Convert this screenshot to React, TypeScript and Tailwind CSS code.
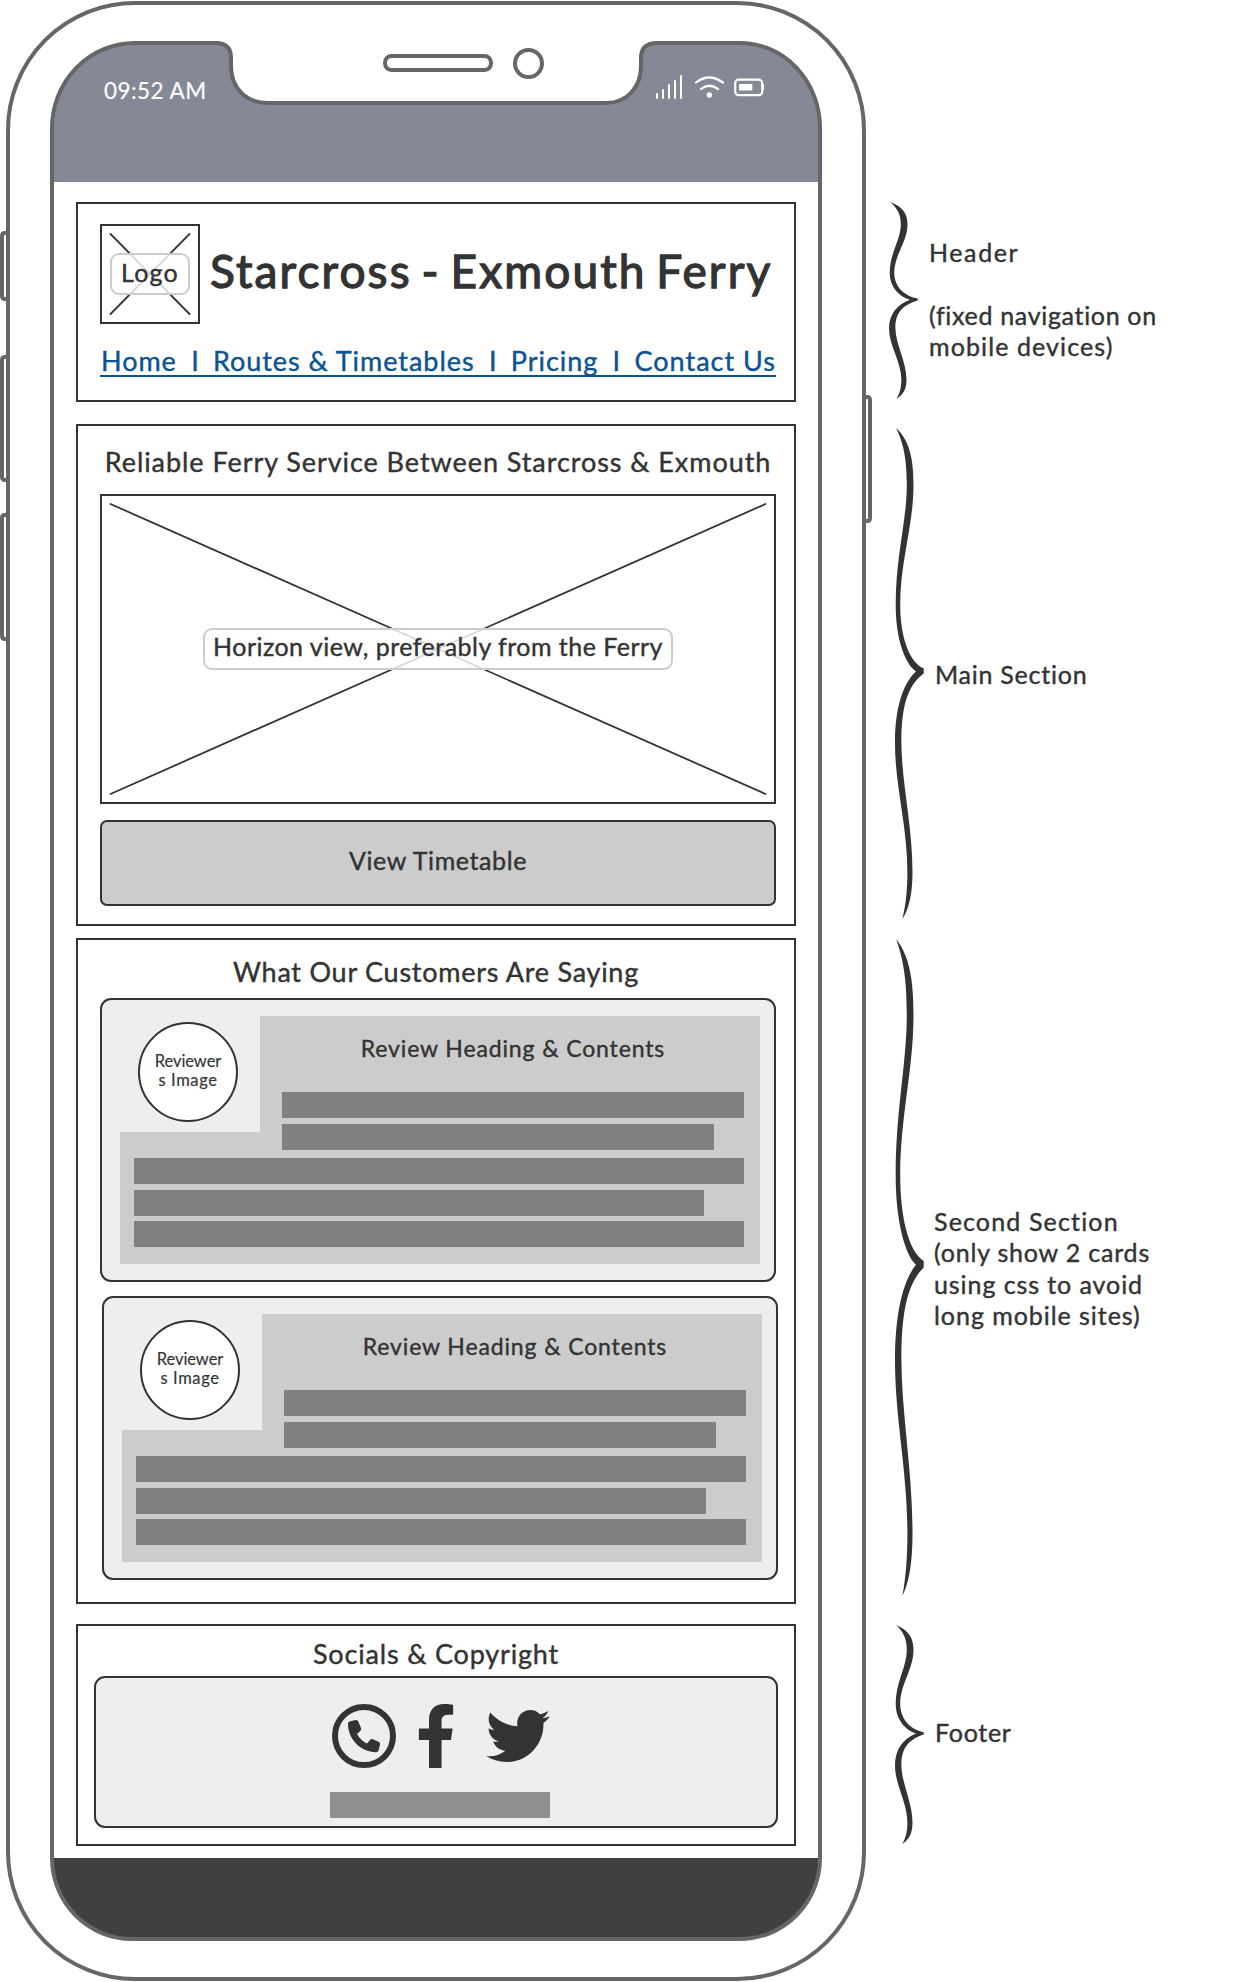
import type { ReactNode } from "react";
import { FaFacebookF, FaTwitter } from "react-icons/fa";

function T({ className, children }: { className: string; children: ReactNode }) {
  return <span className={"whitespace-pre " + className}>{children}</span>;
}

function Crossed({ w, h }: { w: number; h: number }) {
  return (
    <svg className="absolute inset-0" width={w} height={h} stroke="#333" strokeWidth="1.8" strokeLinecap="round">
      <path d={`M10.500 10L${w - 10.5} ${h - 10}M10.500 ${h - 10}L${w - 10.5} 10`} />
    </svg>
  );
}

function Brace({ className }: { className: string }) {
  return (
    <svg className={className} viewBox="0 0 29 100" preserveAspectRatio="none" fill="#333">
      <path d="M1.2 0C8 3 11.8 6 11.8 11.5C11.8 19 .7 26 .7 36C.7 43 10 48 21 49.6C8 52 0 57 0 64.2C0 73 12.4 81 12.4 90.4C12.4 94 11 97 7.4 100C14 98 17.5 95 17.5 90.4C17.5 81 6.4 72 6.4 64C6.4 57 12 52.5 28.7 50V49C13 47.5 5.2 42 5.2 36C5.2 27 18.5 20 18.5 11.5C18.5 6 14 2.5 1.2 0Z" />
    </svg>
  );
}

function Bezel() {
  return (
    <svg className="absolute left-0 top-0" width="880" height="1982" fill="none" stroke="#666" strokeWidth="4">
      <path fill="#848995" stroke="none" d="M52 182V128A83 85 0 0 1 135 43H216Q231 43 231 60C231 84 245 103 268 103H606C628 103 641 86 641 66V60Q641 43 657 43H740A80 85 0 0 1 820 128V182Z" />
      <path fill="#404040" stroke="none" d="M52 1858H820A80 81 0 0 1 740 1939H132A80 81 0 0 1 52 1858Z" />
      <path d="M52 128A83 85 0 0 1 135 43H216Q231 43 231 58V66C231 87 245 103 268 103H606C628 103 641 86 641 66V58Q641 43 657 43H740A80 85 0 0 1 820 128V1858A80 81 0 0 1 740 1939H132A80 81 0 0 1 52 1858Z" />
      <rect x="8" y="3" width="856" height="1976" rx="127" />
      <path d="M8 233H5Q2 233 2 236V296Q2 299 5 299H8M8 357H5Q2 357 2 360V477Q2 480 5 480H8M8 515H5Q2 515 2 518V636Q2 639 5 639H8M864 397H867Q870 397 870 400V518Q870 521 867 521H864" />
      <rect x="385" y="56" width="106" height="14" rx="6.5" />
      <circle cx="528.5" cy="63.5" r="13.5" />
    </svg>
  );
}

function StatusIcons() {
  return (
    <svg className="absolute left-[654px] top-[72px]" width="114" height="30" fill="none" stroke="#fff" strokeWidth="2" strokeLinecap="round">
      <path d="M3 22V26M9 18V26M15 13V26M21 9V26M27 4V26" />
      <path d="M42 10.500Q55 .5 69 10.500M47 17Q55 10.500 64 17" strokeWidth="2.2" />
      <circle cx="55.300" cy="23" r="2.700" fill="#fff" stroke="none" />
      <rect x="81.200" y="7.700" width="27" height="15.500" rx="3.500" strokeWidth="2.200" />
      <path d="M85 12H98.300V18.500H85ZM108 12H110V18.500H108Z" fill="#fff" stroke="none" />
    </svg>
  );
}

function ReviewCard({ className }: { className: string }) {
  return (
    <article className={"relative h-[284px] w-[676px] rounded-[11px] border-2 border-[#333] bg-[#eee] pl-[18px] pt-4 " + className}>
      <div className="flex">
        <div className="flex h-[116px] w-[140px] pl-[18px] pt-1.5">
          <div className="flex h-[100px] w-[100px] flex-col items-center rounded-full border-2 border-[#333] bg-white pt-[28px] text-[16.5px] leading-[19px] [-webkit-text-stroke:0.15px_currentColor]">
            <T className="tracking-[-0.05px]">Reviewer</T>
            <T className="tracking-[0.6px]">s Image</T>
          </div>
        </div>
        <div className="h-[116px] w-[500px] bg-[#ccc] pl-[22px]">
          <h3 className="flex h-[76px] w-[462px] justify-center pt-[18px] text-[23px] leading-[28px]"><T className="tracking-[0.87px]">Review Heading &amp; Contents</T></h3>
          <div className="h-[26px] w-[462px] bg-[#808080]" />
        </div>
      </div>
      <div className="h-[132px] w-[640px] bg-[#ccc] pl-3.5">
        <div className="relative -top-[8.5px] ml-[148px] h-[26px] w-[432px] bg-[#808080]" />
        <div className="h-[26px] w-[610px] bg-[#808080]" />
        <div className="mt-[5.5px] h-[26px] w-[570px] bg-[#808080]" />
        <div className="mt-[5.5px] h-[26px] w-[610px] bg-[#808080]" />
      </div>
    </article>
  );
}

export default function App() {
  return (
    <div className="relative flex h-[1982px] w-[1254px] overflow-hidden bg-white font-['Lato',sans-serif] text-[#333] [-webkit-text-stroke:0.4px_currentColor]">
      <Bezel />
      <StatusIcons />
      <main className="relative flex w-[880px] flex-col pl-[76px]">
        <div className="flex h-[202px] items-start pl-[28px] pt-[77px] text-[22.5px] leading-[28px] text-white [-webkit-text-stroke:0.15px_currentColor]"><T className="tracking-[0.45px]">09:52 AM</T></div>
        <header className="h-[200px] w-[720px] border-2 border-[#333] pl-[22px] pt-5">
          <div className="flex">
            <div className="relative flex h-[100px] w-[100px] items-center justify-center border-2 border-[#333]">
              <div className="absolute -inset-[2px]"><Crossed w={100} h={100} /></div>
              <div className="relative flex h-[42px] w-[80px] shrink-0 justify-center rounded-[9px] border-2 border-[#ccc] bg-white/80 text-[25px] leading-[34px]"><T className="tracking-[1.2px]">Logo</T></div>
            </div>
            <h1 className="ml-[10px] pt-[19px] text-[46px] leading-[56px] [-webkit-text-stroke:1.3px_currentColor]"><T className="tracking-[2.1px] [word-spacing:-4px]">Starcross - Exmouth Ferry</T></h1>
          </div>
          <nav className="mt-[17px] flex h-[36px] w-[676px] justify-between border-b-2 border-[#0b5394] pl-px text-[27px] leading-[40px] text-[#0b5394]">
            <T className="tracking-[0.95px]">Home</T><T className="tracking-normal">I</T>
            <T className="tracking-[0.95px]">Routes &amp; Timetables</T><T className="tracking-normal">I</T>
            <T className="tracking-[0.95px]">Pricing</T><T className="tracking-normal">I</T>
            <T className="tracking-[1px]">Contact Us</T>
          </nav>
        </header>
        <section className="mt-[22px] flex h-[502px] w-[720px] flex-col border-2 border-[#333] pl-[22px]">
          <h2 className="flex h-[68px] w-[676px] justify-center pt-[18px] text-[27px] leading-[36px]"><T className="tracking-[0.94px]">Reliable Ferry Service Between Starcross &amp; Exmouth</T></h2>
          <div className="relative flex h-[310px] w-[676px] items-center justify-center border-2 border-[#333]">
            <div className="absolute -inset-[2px]"><Crossed w={676} h={310} /></div>
            <div className="relative flex h-[42px] w-[470px] justify-center rounded-[9px] border-2 border-[#ccc] bg-white/80 text-[25px] leading-[33px]"><T className="tracking-[0.47px]">Horizon view, preferably from the Ferry</T></div>
          </div>
          <button className="mt-4 flex h-[86px] w-[676px] items-center justify-center rounded-[7px] border-2 border-[#333] bg-[#ccc] pb-1 text-[25px]"><T className="tracking-[0.6px]">View Timetable</T></button>
        </section>
        <section className="mt-3 h-[666px] w-[720px] border-2 border-[#333] pl-[22px]">
          <h2 className="flex h-[58px] w-[676px] justify-center pr-1 pt-[15px] text-[27px] leading-[34px]"><T className="tracking-[0.74px]">What Our Customers Are Saying</T></h2>
          <ReviewCard className="" />
          <ReviewCard className="ml-0.5 mt-[14px]" />
        </section>
        <footer className="mt-5 h-[222px] w-[720px] border-2 border-[#333] pl-4">
          <h2 className="flex h-[50px] w-[684px] justify-center pt-[11px] text-[27px] leading-[34px]"><T className="tracking-[0.82px]">Socials &amp; Copyright</T></h2>
          <div className="h-[152px] w-[684px] rounded-[11px] border-2 border-[#333] bg-[#eee] pl-[234px] pt-[26px]">
            <div className="flex h-16 items-center">
              <svg className="ml-0.5" width="64" height="64" viewBox="0 0 64 64" fill="none">
                <circle cx="32" cy="32" r="29" stroke="#333" strokeWidth="6" />
                <path fill="#333" d="M17.500 17.500L23.500 16Q25.500 15.700 26.300 17.500L29 24Q29.600 25.800 28.200 27L25 30Q28.500 36.500 35 39.500L38 36Q39 34.700 41 35.300L46.500 37.700Q48.600 38.600 48 40.600L46.600 46.500Q46 48.200 44.200 48.200C28 48 16 35 16 19.500Q16 18 17.500 17.500Z" />
              </svg>
              <FaFacebookF className="ml-5 h-16 w-[40px] text-[#333]" />
              <FaTwitter className="ml-[30px] h-16 w-16 text-[#333]" />
            </div>
            <div className="mt-6 h-[26px] w-[220px] bg-[#8f8f8f]" />
          </div>
        </footer>
      </main>
      <aside className="relative flex flex-col text-[25px] leading-[31.3px]">
        <div className="mt-[202px] flex h-[197px] pl-[9px]">
          <Brace className="h-[197px] w-[29px]" />
          <p className="flex flex-col pl-[11px] pt-[35px]">
            <T className="mb-[31.3px] tracking-[1.6px]">Header</T>
            <T className="tracking-[0.67px]">(fixed navigation on</T>
            <T className="tracking-[1.1px]">mobile devices)</T>
          </p>
        </div>
        <div className="mt-[29px] flex h-[491px] pl-[15px]">
          <Brace className="h-[491px] w-[29px]" />
          <p className="pl-[11px] pt-[231px]"><T className="tracking-[0.75px]">Main Section</T></p>
        </div>
        <div className="mt-5 flex h-[657px] pl-[15px]">
          <Brace className="h-[657px] w-[29px]" />
          <p className="flex flex-col pl-2.5 pt-[267px]">
            <T className="tracking-[1.15px]">Second Section</T>
            <T className="tracking-[0.8px]">(only show 2 cards</T>
            <T className="tracking-[0.92px]">using css to avoid</T>
            <T className="tracking-[0.95px]">long mobile sites)</T>
          </p>
        </div>
        <div className="mt-[29px] flex h-[219px] pl-[15px]">
          <Brace className="h-[219px] w-[29px]" />
          <p className="pl-[11px] pt-[92px]"><T className="tracking-[0.7px]">Footer</T></p>
        </div>
      </aside>
    </div>
  );
}
